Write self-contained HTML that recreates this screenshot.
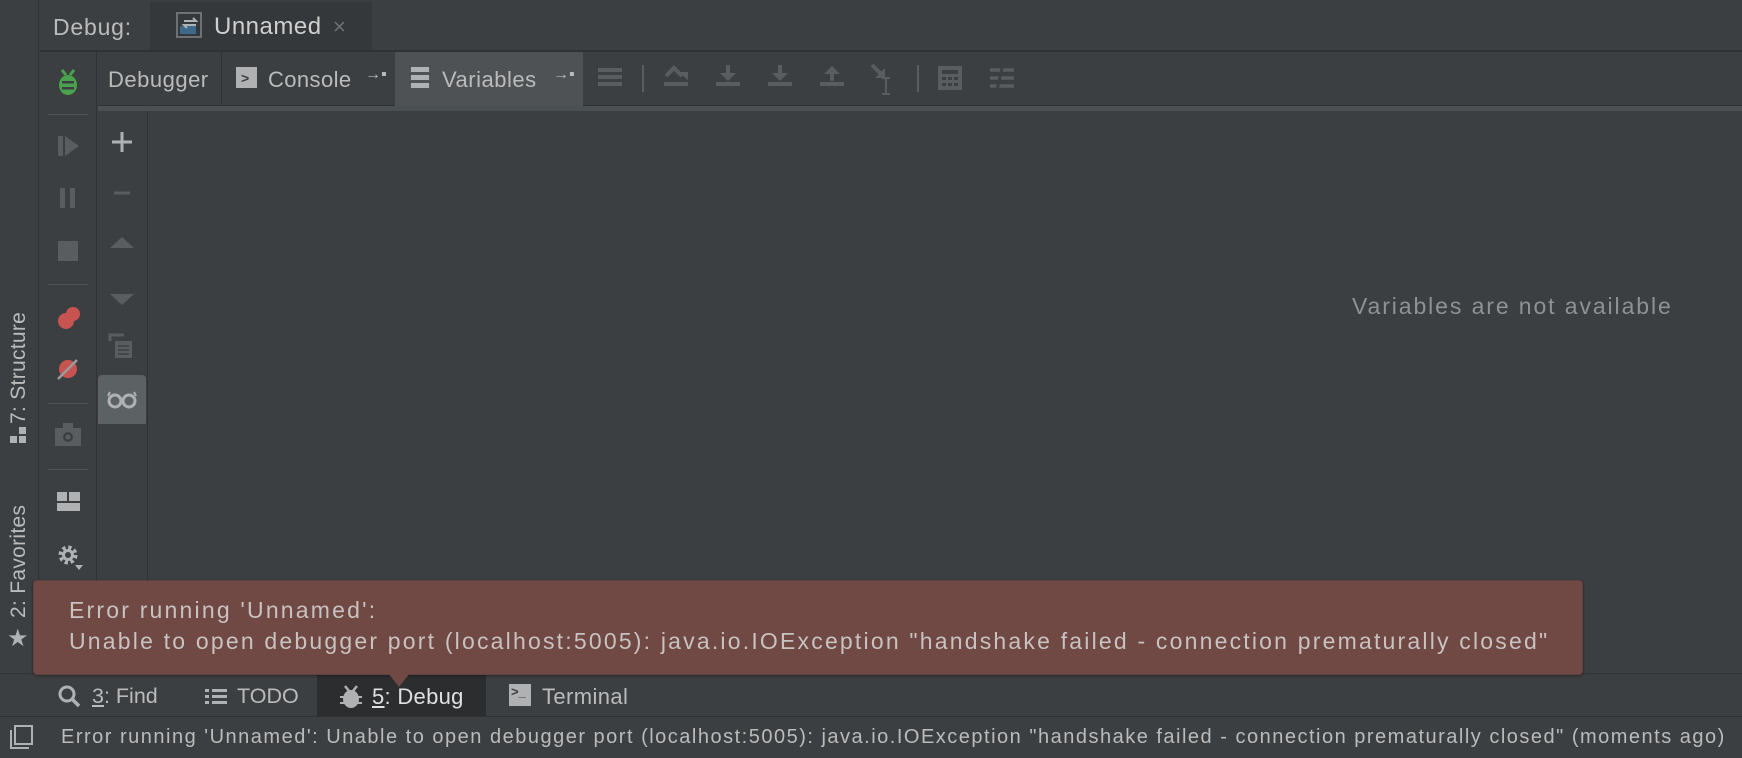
<!DOCTYPE html>
<html><head><meta charset="utf-8"><style>
*{margin:0;padding:0;box-sizing:border-box}
body{width:1742px;height:758px;background:#3c3f41;font-family:"Liberation Sans",sans-serif;color:#bbbbbb;position:relative;overflow:hidden}
.a{position:absolute}
.t{white-space:nowrap}
svg{position:absolute}
</style></head><body>
<!-- left stripe -->
<div class="a" style="left:0;top:0;width:39px;height:673px;background:#3c3f41;border-right:1px solid #323232"></div>
<div class="a t" style="left:7px;top:424px;transform:rotate(-90deg);transform-origin:0 0;font-size:21px;letter-spacing:0.3px;color:#bbbbbb">7: Structure</div>
<div class="a" style="left:10px;top:436px;width:7px;height:7px;background:#afb1b3"></div>
<div class="a" style="left:19px;top:436px;width:7px;height:7px;background:#afb1b3"></div>
<div class="a" style="left:19px;top:427px;width:7px;height:7px;background:#afb1b3"></div>
<div class="a t" style="left:7px;top:618px;transform:rotate(-90deg);transform-origin:0 0;font-size:21px;letter-spacing:0.3px;color:#bbbbbb">2: Favorites</div>
<div class="a" style="left:7px;top:624px;font-size:24px;color:#afb1b3">★</div>

<!-- top header -->
<div class="a" style="left:40px;top:0;width:1702px;height:52px;background:#3c3f41;border-bottom:2px solid #2f3133"></div>
<div class="a t" style="left:53px;top:14px;font-size:23px;letter-spacing:0.8px;color:#bbbbbb">Debug:</div>
<div class="a" style="left:150px;top:2px;width:222px;height:48px;background:#35383a"></div>
<svg style="left:176px;top:12px" width="26" height="26"><rect x="1" y="1" width="24" height="24" fill="none" stroke="#6e7174" stroke-width="2"/><rect x="4" y="14" width="16" height="8" fill="#3d6a8a"/><path d="M8 9h12l-3-3M20 13H8l3 3" stroke="#b0b3b5" stroke-width="2" fill="none"/></svg>
<div class="a t" style="left:214px;top:13px;font-size:24px;letter-spacing:0.5px;color:#cfcfcf">Unnamed</div>
<div class="a t" style="left:333px;top:14px;font-size:22px;color:#6f7275">×</div>

<!-- debug toolbar row -->
<div class="a" style="left:40px;top:52px;width:57px;height:621px;background:#3c3f41;border-right:1px solid #323232"></div>
<svg style="left:55px;top:68px" width="26" height="28" viewBox="0 0 26 28"><path d="M7 2l4 5M19 2l-4 5" stroke="#4aa14e" stroke-width="3"/><ellipse cx="13" cy="17" rx="9" ry="10" fill="#4aa14e"/><rect x="7" y="13" width="12" height="2.5" fill="#3c3f41"/><rect x="7" y="19" width="12" height="2.5" fill="#3c3f41"/></svg>
<div class="a" style="left:98px;top:52px;width:1644px;height:54px;background:#3c3f41;border-bottom:1px solid #323232"></div>
<div class="a" style="left:98px;top:106px;width:1644px;height:5px;background:#4b5052"></div>
<div class="a t" style="left:108px;top:67px;font-size:22px;letter-spacing:0.5px;color:#bbbbbb">Debugger</div>
<div class="a" style="left:221px;top:52px;width:1px;height:54px;background:#323232"></div>
<div class="a" style="left:236px;top:67px;width:21px;height:21px;background:#afb1b3"></div>
<div class="a" style="left:241px;top:70px;font-size:14px;color:#3c3f41;font-weight:bold">&gt;</div>
<div class="a t" style="left:268px;top:67px;font-size:22px;letter-spacing:0.4px;color:#bbbbbb">Console</div>
<div class="a t" style="left:365px;top:66px;font-size:16px;color:#bbbbbb">→▪</div>
<div class="a" style="left:395px;top:52px;width:188px;height:54px;background:#4e5254"></div>
<div class="a" style="left:411px;top:67px;width:18px;height:5px;background:#afb1b3"></div>
<div class="a" style="left:411px;top:75px;width:18px;height:5px;background:#afb1b3"></div>
<div class="a" style="left:411px;top:83px;width:18px;height:5px;background:#afb1b3"></div>
<div class="a t" style="left:442px;top:67px;font-size:22px;letter-spacing:0.5px;color:#bbbbbb">Variables</div>
<div class="a t" style="left:553px;top:66px;font-size:16px;color:#bbbbbb">→▪</div>
<!-- disabled icons -->
<svg style="left:596px;top:62px" width="440" height="34" fill="#5a5d5f" stroke="#5a5d5f">
<rect x="2" y="6" width="24" height="4" stroke="none"/><rect x="2" y="13" width="24" height="4" stroke="none"/><rect x="2" y="20" width="24" height="4" stroke="none"/>
<line x1="47" y1="3" x2="47" y2="30" stroke-width="2"/>
<rect x="68" y="20" width="24" height="4" stroke="none"/><path d="M70 14l8-8 8 8" fill="none" stroke-width="4"/><path d="M82 10l10 0 0 8z" stroke="none"/>
<rect x="120" y="20" width="24" height="4" stroke="none"/><path d="M132 3v10" stroke-width="4"/><path d="M124 11h16l-8 8z" stroke="none"/>
<rect x="172" y="20" width="24" height="4" stroke="none"/><path d="M184 3v10" stroke-width="4"/><path d="M176 11h16l-8 8z" stroke="none"/>
<rect x="224" y="20" width="24" height="4" stroke="none"/><path d="M236 9v10" stroke-width="4"/><path d="M228 12h16l-8-8z" stroke="none"/>
<path d="M276 3l10 10" stroke-width="4" fill="none"/><path d="M289 6v10h-10z" stroke="none"/><path d="M290 16v16M286 16h8M286 32h8" stroke-width="2" fill="none"/>
<line x1="322" y1="3" x2="322" y2="30" stroke-width="2"/>
<rect x="342" y="4" width="24" height="24" stroke="none"/><rect x="346" y="8" width="16" height="4" fill="#3c3f41" stroke="none"/><path d="M346 15h4v3h-4zM352 15h4v3h-4zM358 15h4v3h-4zM346 21h4v3h-4zM352 21h4v3h-4zM358 21h4v3h-4z" fill="#3c3f41" stroke="none"/>
<path d="M394 8h24M394 16h24M394 24h24" stroke-width="3.5"/><path d="M401 28l5-22" stroke="#3c3f41" stroke-width="3"/>
</svg>

<!-- left toolbar icons -->
<div class="a" style="left:48px;top:114px;width:40px;height:1px;background:#505355"></div>
<svg style="left:55px;top:134px" width="30" height="440" fill="#5a5d5f">
<rect x="3" y="2" width="5" height="20"/><path d="M10 2l14 10-14 10z"/>
<rect x="5" y="54" width="5" height="20"/><rect x="15" y="54" width="5" height="20"/>
<rect x="3" y="107" width="20" height="20"/>
<circle cx="18" cy="180" r="7" fill="#c75450"/><circle cx="11" cy="187" r="8" fill="#c75450"/>
<circle cx="13" cy="235" r="9" fill="#c75450"/><path d="M3 245l19-19" stroke="#9a9c9e" stroke-width="2.5"/>
<path d="M0 294h26v18H0z"/><rect x="8" y="289" width="10" height="6"/><circle cx="13" cy="303" r="5" fill="#3c3f41"/><circle cx="13" cy="303" r="2.5"/>
<path d="M2 358h10v9H2zM14 358h11v9H14zM2 369h23v8H2z" fill="#afb1b3"/>
<circle cx="13" cy="421" r="7" fill="none" stroke="#afb1b3" stroke-width="5" stroke-dasharray="3 2.5"/><circle cx="13" cy="421" r="6" fill="#afb1b3"/><circle cx="13" cy="421" r="3" fill="#3c3f41"/><path d="M20 431h8l-4 5z" fill="#afb1b3"/>
</svg>
<div class="a" style="left:48px;top:284px;width:40px;height:1px;background:#505355"></div>
<div class="a" style="left:48px;top:403px;width:40px;height:1px;background:#505355"></div>
<div class="a" style="left:48px;top:469px;width:40px;height:1px;background:#505355"></div>

<!-- second toolbar -->
<div class="a" style="left:147px;top:111px;width:1px;height:470px;background:#323232"></div>
<svg style="left:98px;top:124px" width="48" height="300">
<path d="M24 8v20M14 18h20" stroke="#afb1b3" stroke-width="3"/>
<path d="M16 69h16" stroke="#5a5d5f" stroke-width="3"/>
<path d="M12 124l12-11 12 11z" fill="#5a5d5f"/>
<path d="M12 170l12 11 12-11z" fill="#5a5d5f"/>
<path d="M12 217v-6h14" stroke="#5a5d5f" stroke-width="3" fill="none"/><rect x="17" y="217" width="17" height="17" fill="#5a5d5f"/><path d="M20 222h11M20 226h11M20 230h11" stroke="#3c3f41" stroke-width="1.5"/>
<rect x="0" y="251" width="48" height="51" rx="4" fill="#5c6164"/>
<circle cx="17" cy="277" r="6" fill="none" stroke="#afb1b3" stroke-width="3"/><circle cx="31" cy="277" r="6" fill="none" stroke="#afb1b3" stroke-width="3"/><path d="M10 272l2-4M38 272l-2-4" stroke="#afb1b3" stroke-width="2"/>
</svg>

<div class="a t" style="left:1352px;top:293px;font-size:23px;letter-spacing:1.9px;color:#8f9193">Variables are not available</div>

<!-- bottom tool window bar -->
<div class="a" style="left:0;top:673px;width:1742px;height:44px;background:#3c3f41;border-top:1px solid #323232"></div>
<svg style="left:58px;top:685px" width="24" height="24"><circle cx="9" cy="9" r="7" fill="none" stroke="#afb1b3" stroke-width="3"/><path d="M14 14l7 7" stroke="#afb1b3" stroke-width="3.5"/></svg>
<div class="a t" style="left:92px;top:684px;font-size:21.5px;color:#bbbbbb"><u>3</u>: Find</div>
<svg style="left:205px;top:688px" width="22" height="18" fill="#afb1b3"><rect x="0" y="1" width="4" height="3"/><rect x="7" y="1" width="15" height="3"/><rect x="0" y="7" width="4" height="3"/><rect x="7" y="7" width="15" height="3"/><rect x="0" y="13" width="4" height="3"/><rect x="7" y="13" width="15" height="3"/></svg>
<div class="a t" style="left:237px;top:684px;font-size:21.5px;color:#bbbbbb">TODO</div>
<div class="a" style="left:317px;top:674px;width:169px;height:43px;background:#2b2d2f"></div>
<svg style="left:340px;top:684px" width="22" height="26" fill="#afb1b3"><path d="M5 2l4 5M17 2l-4 5" stroke="#afb1b3" stroke-width="2.5"/><ellipse cx="11" cy="15" rx="8" ry="9"/><rect x="0" y="12" width="22" height="2"/><rect x="0" y="18" width="22" height="2"/></svg>
<div class="a t" style="left:372px;top:684px;font-size:22px;letter-spacing:0.3px;color:#e0e0e0"><u>5</u>: Debug</div>
<div class="a" style="left:509px;top:684px;width:22px;height:22px;background:#afb1b3"></div>
<div class="a t" style="left:511px;top:684px;font-size:13px;color:#3c3f41;font-weight:bold">&gt;_</div>
<div class="a t" style="left:542px;top:684px;font-size:22px;letter-spacing:0.4px;color:#bbbbbb">Terminal</div>

<!-- status bar -->
<div class="a" style="left:0;top:716px;width:1742px;height:42px;background:#3c3f41;border-top:1px solid #323232"></div>
<svg style="left:9px;top:724px" width="26" height="26"><path d="M2 6v18h18" stroke="#afb1b3" stroke-width="2" fill="none"/><rect x="6" y="2" width="17" height="18" fill="none" stroke="#afb1b3" stroke-width="2"/></svg>
<div class="a t" style="left:61px;top:726px;font-size:20px;letter-spacing:1.5px;color:#bbbbbb">Error running 'Unnamed': Unable to open debugger port (localhost:5005): java.io.IOException "handshake failed - connection prematurally closed" (moments ago)</div>

<!-- error popup -->
<div class="a" style="left:33px;top:580px;width:1550px;height:95px;background:#704844;border:1px solid #5e4240;border-radius:4px;box-shadow:0 1px 3px rgba(0,0,0,.35)"></div>
<div class="a" style="left:388px;top:673px;width:0;height:0;border-left:11px solid transparent;border-right:11px solid transparent;border-top:14px solid #704844"></div>
<div class="a t" style="left:69px;top:597px;font-size:23px;letter-spacing:2.2px;color:#c8c2c0">Error running 'Unnamed':</div>
<div class="a t" style="left:69px;top:628px;font-size:23px;letter-spacing:2.2px;color:#c8c2c0">Unable to open debugger port (localhost:5005): java.io.IOException "handshake failed - connection prematurally closed"</div>
</body></html>
